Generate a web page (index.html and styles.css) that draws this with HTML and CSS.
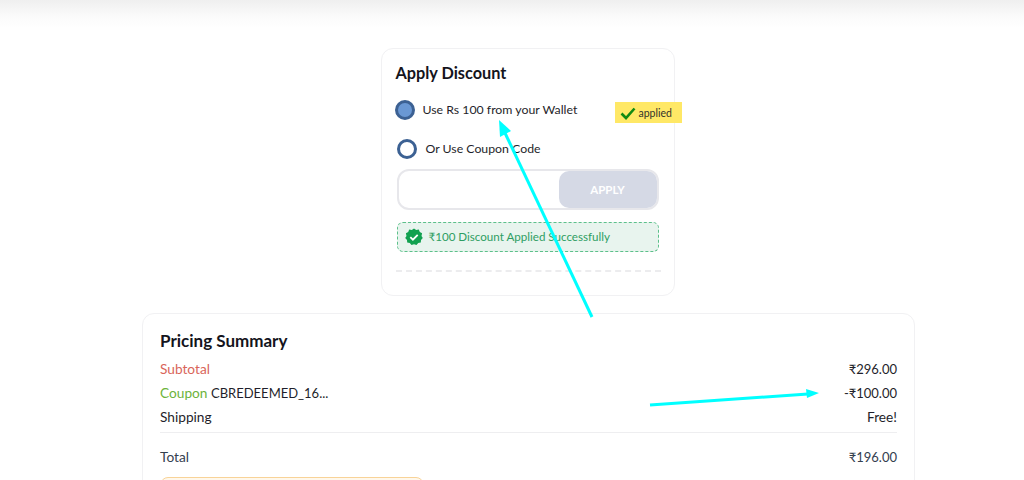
FILE: index.html
```html
<!DOCTYPE html>
<html lang="en">
<head>
<meta charset="utf-8">
<title>Apply Discount</title>
<link rel="stylesheet" href="styles.css">
</head>
<body>
<div class="topshade"></div>
<main class="page">
  <section class="card discount">
    <h2 class="title">Apply Discount</h2>
    <div class="option option-wallet">
      <span class="radio radio-on"></span>
      <span>Use Rs 100 from your Wallet</span>
    </div>
    <div class="badge">
      <svg class="badge-icon" viewBox="0 0 16 14" width="16" height="14"><path d="M1.5 7.5 L6 12 L14.5 2.5" fill="none" stroke="#128a12" stroke-width="2.6"/></svg>
      <span>applied</span>
    </div>
    <div class="option option-coupon">
      <span class="radio"></span>
      <span>Or Use Coupon Code</span>
    </div>
    <div class="coupon-field">
      <div class="coupon-input"></div>
      <div class="coupon-btn">APPLY</div>
    </div>
    <div class="success">
      <svg class="success-icon" viewBox="0 0 18 18" width="18" height="18">
        <path fill="#12a150" d="M9 0.5l2.2 1.4 2.6-.3 1 2.4 2.3 1.3-.6 2.6L17.800 10l-1.800 1.900-.2 2.600-2.600.5L11.500 17 9 16.200 6.500 17l-1.700-2-2.600-.5-.2-2.600L.2 10l1.300-2.100-.6-2.600 2.300-1.300 1-2.400 2.600.3z"/>
        <path d="M5.300 9.200l2.600 2.500 4.800-4.900" fill="none" stroke="#fff" stroke-width="1.800"/>
      </svg>
      <span>₹100 Discount Applied Successfully</span>
    </div>
    <div class="dash"></div>
  </section>

  <section class="card summary">
    <h2 class="title title-summary">Pricing Summary</h2>
    <div class="row"><span class="red">Subtotal</span><span class="amount">₹296.00</span></div>
    <div class="row"><span><span class="green">Coupon</span> <span class="code">CBREDEEMED_16...</span></span><span class="amount">-₹100.00</span></div>
    <div class="row"><span>Shipping</span><span>Free!</span></div>
    <div class="divider"></div>
    <div class="row total"><span>Total</span><span class="amount">₹196.00</span></div>
    <div class="notice"></div>
  </section>
</main>
<svg class="arrows" viewBox="0 0 1024 480" width="1024" height="480">
  <path d="M592 317 L505 133" stroke="#00ffff" stroke-width="3" fill="none"/>
  <polygon points="499,120 511,131 500,137" fill="#00ffff"/>
  <path d="M650 405 L808 394" stroke="#00ffff" stroke-width="3" fill="none"/>
  <polygon points="819,393 806,389 807,398" fill="#00ffff"/>
</svg>
</body>
</html>
```

FILE: styles.css
```css
* { box-sizing: border-box; }
html, body { margin: 0; height: 480px; overflow: hidden; background: #fff; }
body {
  position: relative;
  font-family: Lato, "Noto Sans", "DejaVu Sans", sans-serif;
  color: #1f1f2b;
  font-size: 14px;
}
.topshade {
  position: absolute;
  left: 0; right: 0; top: 0;
  height: 28px;
  background: linear-gradient(#efefef, #fbfbfb 60%, #fff);
}
.page {
  position: relative;
  height: 480px;
  overflow: hidden;
  padding: 48px 109px 0 142px;
  display: flex;
  flex-direction: column;
  align-items: center;
  gap: 18px;
}
.card {
  background: #fff;
  border: 1px solid #f1f1f3;
  border-radius: 12px;
  flex: none;
}
.title {
  margin: 0;
  font-size: 16.300px;
  line-height: 24px;
  font-weight: 700;
  color: #14141c;
}
.title-summary { font-size: 17px; }
.discount {
  position: relative;
  width: 294px;
  height: 248px;
  margin-right: 2px;
  padding: 12px 13px 0;
  display: flex;
  flex-direction: column;
}
.discount .title { margin-left: 1px; }
.option { display: flex; align-items: center; font-size: 12.300px; line-height: 20px; }
.option-wallet { margin-top: 15px; gap: 8px; margin-left: 0; }
.option-coupon { margin-top: 19px; margin-left: 2px; gap: 9px; }
.radio {
  width: 20px; height: 20px;
  border-radius: 50%;
  border: 3.500px solid #3c6193;
  background: #fff;
  flex: none;
}
.radio-on { background: #6a98d4; }
.badge {
  position: absolute;
  left: 233px; top: 53px;
  width: 67px; height: 21px;
  padding-left: 5px;
  display: flex;
  align-items: center;
  gap: 3px;
  background: #ffe866;
  font-size: 10.500px;
  color: #33332b;
}
.coupon-field {
  margin: 10px 2px 0;
  height: 41px;
  border: 2px solid #e7e7eb;
  border-radius: 12px;
  display: flex;
  justify-content: flex-end;
}
.coupon-input { flex: 1; }
.coupon-btn {
  width: 98px;
  background: #d5d9e5;
  border-radius: 10px;
  color: #fff;
  font-weight: 700;
  font-size: 11.500px;
  display: flex;
  align-items: center;
  justify-content: center;
}
.success {
  margin: 12px 2px 0;
  height: 30px;
  border: 1px dashed #5cc08a;
  border-radius: 6px;
  background: #e8f4ee;
  color: #2e9e63;
  display: flex;
  align-items: center;
  gap: 6px;
  padding-left: 7px;
  font-size: 11.600px;
  line-height: 32px;
}
.dash {
  margin: 18px 0 0 1px;
  border-top: 2px dashed #ececee;
}
.summary {
  align-self: stretch;
  margin-top: -1px;
  padding: 15px 17px 0;
  height: 200px;
}
.title + .row { margin-top: 4px; }
.row {
  display: flex;
  justify-content: space-between;
  font-size: 13.700px;
  line-height: 24px;
}
.code { font-size: 13px; }
.amount { font-size: 13px; }
.red { color: #d9655a; }
.green { color: #6cb33a; }
.divider { border-top: 1px solid #eeeef0; margin-top: 3px; }
.total { margin-top: 12px; color: #34404f; }
.notice {
  margin-top: 8px;
  width: 264px;
  height: 40px;
  border: 1px solid #f8d398;
  border-radius: 8px;
  background: #fff8ec;
}
.arrows { position: absolute; left: 0; top: 0; pointer-events: none; }
```
